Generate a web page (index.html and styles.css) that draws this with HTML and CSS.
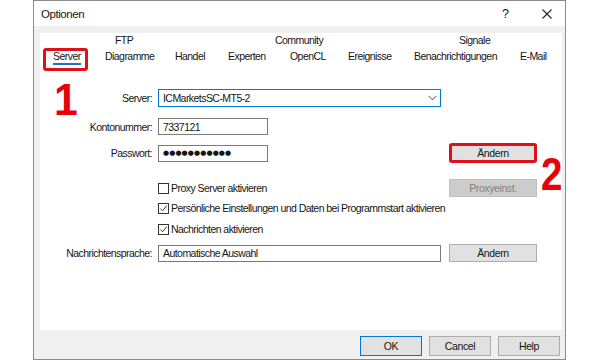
FILE: index.html
```html
<!DOCTYPE html>
<html lang="de">
<head>
<meta charset="utf-8">
<title>Optionen</title>
<link rel="stylesheet" href="styles.css">
</head>
<body>
<div class="window">
  <div class="titlebar">
    <span class="title">Optionen</span>
    <span class="help">?</span>
    <span class="close"><svg width="10" height="10" viewBox="0 0 10 10"><path d="M0.5 0.5L9.5 9.5M9.5 0.5L0.5 9.5" stroke="#222" stroke-width="1.1" fill="none"/></svg></span>
  </div>
  <div class="body">
    <div class="panel">
      <div class="tabs">
        <div class="tabrow upper">
          <span class="slot" style="width:75px"></span>
          <span class="slot" style="width:160px">FTP</span>
          <span class="slot" style="width:184px">Community</span>
          <span class="slot">Signale</span>
        </div>
        <div class="tabrow lower">
          <span class="slot" style="width:13px"></span>
          <span class="slot" style="width:52px"><span class="active">Server</span></span>
          <span class="slot" style="width:70px">Diagramme</span>
          <span class="slot" style="width:53px">Handel</span>
          <span class="slot" style="width:62px">Experten</span>
          <span class="slot" style="width:58px">OpenCL</span>
          <span class="slot" style="width:66px">Ereignisse</span>
          <span class="slot" style="width:106px">Benachrichtigungen</span>
          <span class="slot">E-Mail</span>
        </div>
      </div>

      <div class="form">
        <div class="row r1">
          <label class="lbl">Server:</label>
          <div class="select"><span>ICMarketsSC-MT5-2</span><svg width="9" height="6" viewBox="0 0 9 6"><path d="M0.5 0.8L4.5 4.8L8.5 0.8" stroke="#555" stroke-width="1" fill="none"/></svg></div>
        </div>
        <div class="row r2">
          <label class="lbl">Kontonummer:</label>
          <div class="input short">7337121</div>
        </div>
        <div class="row r3">
          <label class="lbl">Passwort:</label>
          <div class="input short dots">●●●●●●●●●●●</div>
          <button class="btn marked">Ändern</button>
        </div>
        <div class="row r4">
          <span></span>
          <div class="check"><span class="box"></span>Proxy Server aktivieren</div>
          <button class="btn disabled">Proxyeinst.</button>
        </div>
        <div class="row r5">
          <span></span>
          <div class="check"><span class="box"><svg width="10" height="10" viewBox="0 0 10 10"><path d="M1.5 5L4 7.5L8.7 1.8" stroke="#222" stroke-width="1" fill="none"/></svg></span>Persönliche Einstellungen und Daten bei Programmstart aktivieren</div>
        </div>
        <div class="row r6">
          <span></span>
          <div class="check"><span class="box"><svg width="10" height="10" viewBox="0 0 10 10"><path d="M1.5 5L4 7.5L8.7 1.8" stroke="#222" stroke-width="1" fill="none"/></svg></span>Nachrichten aktivieren</div>
        </div>
        <div class="row r7">
          <label class="lbl">Nachrichtensprache:</label>
          <div class="input long">Automatische Auswahl</div>
          <button class="btn">Ändern</button>
        </div>
      </div>

      <span class="tabmark"></span>
      <span class="num num1">1</span>
      <span class="num num2">2</span>
    </div>
    <div class="buttons">
      <button class="btn foot default">OK</button>
      <button class="btn foot">Cancel</button>
      <button class="btn foot">Help</button>
    </div>
  </div>
</div>
</body>
</html>
```

FILE: styles.css
```css
* { box-sizing: border-box; }
html, body { margin: 0; padding: 0; background: #fff; }
body {
  font-family: "Liberation Sans", Arial, sans-serif;
  font-size: 10.5px;
  letter-spacing: -0.55px;
  color: #151515;
}
.window {
  margin-left: 33px;
  width: 533px;
  height: 360px;
  border: 1px solid #8c8c8c;
  background: #f0f0f0;
}
.titlebar {
  height: 25px;
  background: #fff;
  display: flex;
  align-items: center;
  padding-left: 7px;
}
.title { font-size: 11.5px; letter-spacing: -0.45px; flex: 1; }
.help { font-size: 12.5px; letter-spacing: 0; width: 20px; margin-right: 20px; }
.close { width: 10px; height: 10px; margin-right: 13px; display: flex; }
.body { padding: 5px 3px 5px 6px; }
.panel {
  position: relative;
  height: 297px;
  background: #fff;
}
.tabs { height: 32px; }
.tabrow { display: flex; height: 14px; line-height: 14px; margin-top: 2px; white-space: nowrap; }
.slot { flex: none; }
.active { position: relative; display: inline-block; }
.active::after {
  content: "";
  position: absolute;
  left: 0; right: 0; bottom: -2px;
  height: 2px;
  background: #2b6cc4;
}
.form { margin-top: 24px; }
.row {
  display: grid;
  grid-template-columns: 118px 291px 88px;
  align-items: center;
}
.r1 { height: 18px; }
.r2 { height: 17px; margin-top: 11px; }
.r3 { height: 17px; margin-top: 9px; }
.r4 { height: 18px; margin-top: 18px; }
.r5 { height: 18px; margin-top: 2px; }
.r6 { height: 18px; margin-top: 3px; }
.r7 { height: 17px; margin-top: 6px; }
.lbl { text-align: right; padding-right: 6px; white-space: nowrap; }
.select {
  width: 283px; height: 18px;
  border: 1px solid #0078d7;
  display: flex; align-items: center; justify-content: space-between;
  padding: 0 3px 0 4px;
  background: #fff;
}
.input {
  height: 17px;
  border: 1px solid #7a7a7a;
  background: #fff;
  display: flex; align-items: center;
  padding-left: 4px;
  white-space: nowrap;
}
.short { width: 110px; }
.long { width: 283px; }
.dots { font-family: "DejaVu Sans", sans-serif; font-size: 7px; letter-spacing: 0.1px; }
.check { display: flex; align-items: center; white-space: nowrap; }
.box {
  width: 11px; height: 11px;
  border: 1px solid #333;
  margin-right: 2px;
  display: flex; align-items: center; justify-content: center;
  background: #fff;
}
.box svg { display: block; width: 9px; height: 9px; }
.btn {
  font: inherit;
  letter-spacing: -0.4px;
  color: #151515;
  width: 88px; height: 18px;
  background: #e1e1e1;
  border: 1px solid #adadad;
  padding: 0;
}
.btn.disabled { background: #cccccc; border-color: #bfbfbf; color: #838383; }
.marked { position: relative; }
.marked::after {
  content: "";
  position: absolute;
  left: -1px; right: -1px; top: -2px; bottom: -2px;
  border: 3px solid #e0101a;
  border-radius: 3px;
}
.tabmark {
  position: absolute;
  left: 3px; top: 15px;
  width: 45px; height: 23px;
  border: 3px solid #e0101a;
  border-radius: 3px;
}
.num {
  position: absolute;
  color: #e8000b;
  font-family: "Liberation Sans", sans-serif;
  font-weight: bold;
  letter-spacing: 0;
  line-height: 1;
  transform-origin: left top;
}
.num1 { left: 14px; top: 44px; font-size: 45px; transform: scaleX(0.95); }
.num2 { left: 501px; top: 117px; font-size: 47px; transform: scaleX(0.82); }
.buttons {
  display: flex;
  justify-content: flex-end;
  gap: 7px;
  margin-top: 6px;
  padding-right: 2px;
}
.btn.foot { width: 62px; height: 20px; }
.btn.default { border-color: #0078d7; }
```
